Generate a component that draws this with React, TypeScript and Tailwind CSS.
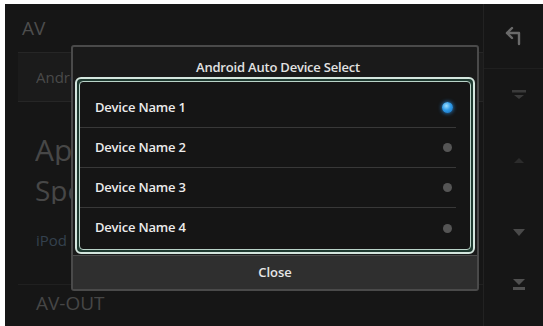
import React from "react";

const font = { fontFamily: '"Open Sans", "Noto Sans", "Liberation Sans", sans-serif' };

function Row({ label, selected, last }: { label: string; selected?: boolean; last?: boolean }) {
  return (
    <div className={`mr-[14px] flex h-[40px] items-center justify-between pl-[15px] ${last ? "" : "border-b border-[#383838]"}`}>
      <span className="text-[13px] font-semibold tracking-[-0.2px] text-[#ececec]">{label}</span>
      {selected ? (
        <span className="mr-[3px] h-[11px] w-[11px] rounded-full bg-[radial-gradient(circle_at_40%_35%,#9fe0ff_0%,#2f9be8_45%,#1565b0_100%)] shadow-[0_0_4px_#2a8ee0]" />
      ) : (
        <span className="mr-[4px] h-[9px] w-[9px] rounded-full bg-[#555555]" />
      )}
    </div>
  );
}

export default function App() {
  return (
    <div className="h-[326px] w-[543px] overflow-hidden bg-white pl-[5px] pt-[4px]" style={font}>
      <div className="relative flex h-[322px] w-[538px] bg-[#161616]">
        {/* main background content */}
        <div className="flex flex-1 flex-col">
          <div className="flex h-[48px] items-center pl-[17px] text-[19px] text-[#4d4d4d]">AV</div>
          <div className="flex flex-col pl-[13px]">
            <div className="flex h-[50px] items-center border-y border-[#262626] bg-[#1b1b1b] pl-[18px]">
              <span className="w-[36px] overflow-hidden whitespace-nowrap text-[15px] text-[#4a4a4a]">Android Auto</span>
            </div>
            <div className="h-[24px]" />
            <div className="flex h-[48px] items-center pl-[17px]">
              <span className="w-[36px] overflow-hidden whitespace-nowrap text-[30px] leading-none text-[#474747]">Apple CarPlay</span>
            </div>
            <div className="flex h-[32px] items-center pl-[17px]">
              <span className="w-[36px] overflow-hidden whitespace-nowrap text-[28px] leading-none text-[#474747]">Speaker</span>
            </div>
            <div className="h-[20px]" />
            <div className="flex h-[28px] items-center pl-[18px]">
              <span className="w-[36px] overflow-hidden whitespace-nowrap text-[15px] text-[#34414e]">iPod</span>
            </div>
            <div className="h-[30px]" />
            <div className="flex h-[38px] items-center border-t border-[#202020] pl-[18px] text-[19px] text-[#464646]">AV-OUT</div>
          </div>
        </div>
        {/* right sidebar */}
        <div className="flex w-[60px] flex-col items-center border-l border-[#222]">
          <div className="flex h-[64px] items-center">
            <svg width="22" height="22" viewBox="0 0 22 22" fill="none" stroke="#6a6a6a" strokeWidth="2.4" strokeLinecap="round" strokeLinejoin="round">
              <path d="M9 3 L4 8 L9 13" />
              <path d="M4 8 H16 V19" />
            </svg>
          </div>
          <div className="flex h-[54px] w-full items-center justify-center border-t border-[#1f1f1f] pl-[10px]">
            <svg width="16" height="14" viewBox="0 0 16 14" fill="#3a3a3a">
              <rect x="1" y="1" width="14" height="2.5" />
              <path d="M3 6 H13 L8 10 Z" />
            </svg>
          </div>
          <div className="flex h-[76px] items-center justify-center pl-[10px]">
            <svg width="12" height="8" viewBox="0 0 12 8" fill="#2c2c2c">
              <path d="M1 7 L6 2 L11 7 Z" />
            </svg>
          </div>
          <div className="flex h-[68px] items-center justify-center pl-[10px]">
            <svg width="14" height="10" viewBox="0 0 14 10" fill="#4a4a4a">
              <path d="M1 2 H13 L7 9 Z" />
            </svg>
          </div>
          <div className="flex h-[38px] items-center justify-center pl-[10px]">
            <svg width="16" height="16" viewBox="0 0 16 16" fill="#505050">
              <path d="M2 2 H14 L8 8 Z" />
              <rect x="2" y="10" width="12" height="3" />
            </svg>
          </div>
        </div>

        {/* dialog */}
        <div className="absolute left-[66px] top-[41px] flex h-[246px] w-[408px] flex-col rounded-[3px] border-2 border-[#4a4a4a] bg-[#1a1a1a]">
          <div className="mt-[1px] flex h-[29px] items-end justify-center pl-[6px] text-[13px] font-semibold tracking-[-0.2px] text-[#e2e2e2]">
            Android Auto Device Select
          </div>
          <div className="mx-[2px] rounded-[6px] border-2 border-[#d4e6de] bg-[#1f3b31] p-[2px]">
            <div className="rounded-[4px] border-[1.5px] border-[#b9d3c8] bg-[#151515] pb-[1px] pt-[6px]">
              <Row label="Device Name 1" selected />
              <Row label="Device Name 2" />
              <Row label="Device Name 3" />
              <Row label="Device Name 4" last />
            </div>
          </div>
          <div className="mt-[1px] flex flex-1 items-center justify-center border-t border-[#4c4c4c] bg-[#2f2f2f] text-[13px] font-semibold text-[#e6e6e6]">
            Close
          </div>
        </div>
      </div>
    </div>
  );
}
